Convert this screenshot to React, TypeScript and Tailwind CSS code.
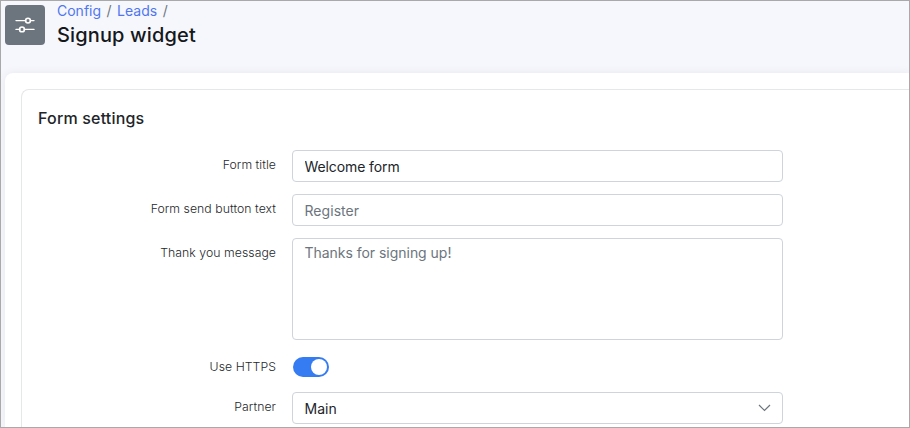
import type { ReactNode } from 'react';

function Row({ label, children }: { label: string; children: ReactNode }) {
  return (
    <div className="flex items-start">
      <label className="w-[254px] shrink-0 pt-1.5 text-right text-[12.25px] font-[350] leading-[18px] tracking-[0.05px] text-[#24282c]">
        {label}
      </label>
      <div className="ml-4 w-[491px]">{children}</div>
    </div>
  );
}

const field =
  'block w-full rounded-[4px] border border-[#ced4da] bg-white pl-[11.5px] text-[14px] leading-[21px] text-[#212529] outline-none placeholder:text-[#6c757d] placeholder:opacity-100';

export default function App() {
  return (
    <div className="flex h-[428px] w-[910px] flex-col overflow-hidden border border-[#a9a9a9] bg-[#f6f7fc] font-['Inter','Liberation_Sans',sans-serif]">
      <header className="flex h-[72px] shrink-0 pl-1 pt-1">
        <div className="flex size-10 items-center justify-center rounded-[4px] bg-[#6c757d]">
          <svg width="20" height="16" viewBox="0 0 20 16" fill="none" stroke="#fff" strokeWidth="1.4" strokeLinecap="round">
            <path d="M1 3.6h9.7M15.3 3.6H19M1 12.4h3.7M9.3 12.4H19" />
            <circle cx="13" cy="3.6" r="2.4" strokeWidth="1.6" />
            <circle cx="7" cy="12.4" r="2.4" strokeWidth="1.6" />
          </svg>
        </div>
        <div className="-mt-[5px] ml-3">
          <nav className="flex h-[22px] items-start gap-[5.5px] text-[14px] font-[380] leading-[22px] text-[#6c757d]">
            <a className="text-[#4f76f0]">Config</a>
            <span>/</span>
            <a className="text-[#4f76f0]">Leads</a>
            <span>/</span>
          </nav>
          <h1 className="text-[20px] font-medium leading-[26px] tracking-[0.14px] text-[#15181b]">Signup widget</h1>
        </div>
      </header>
      <main className="ml-1 flex-1 rounded-tl-[8px] bg-white pl-4 pt-4 shadow-[0_0_8px_rgba(60,50,90,0.08)]">
        <section className="h-full rounded-tl-[8px] border-l border-t border-[#e6e7e9] pt-[17px]">
          <h2 className="pl-4 text-[16px] font-medium leading-[22px] tracking-[0.18px] text-[#212529]">Form settings</h2>
          <div className="mt-[21px] flex flex-col gap-3">
            <Row label="Form title">
              <input className={`${field} h-8 tracking-[-0.1px]`} defaultValue="Welcome form" />
            </Row>
            <Row label="Form send button text">
              <input className={`${field} h-8 tracking-[0.05px]`} placeholder="Register" />
            </Row>
            <Row label="Thank you message">
              <textarea className={`${field} h-[102px] resize-none pt-[3px] tracking-[-0.03px]`} placeholder="Thanks for signing up!" />
            </Row>
            <Row label="Use HTTPS">
              <div className="flex h-7 items-center pl-px">
                <div className="mt-[2px] flex h-5 w-9 items-center justify-end rounded-full bg-[#357bf2] pr-0.5">
                  <span className="size-4 rounded-full bg-white" />
                </div>
              </div>
            </Row>
            <Row label="Partner">
              <div className={`${field} h-8`}>
                <div className="flex h-[30px] items-center justify-between pr-[11px]">
                  <span>Main</span>
                  <svg width="13" height="8" viewBox="0 0 13 8" fill="none" stroke="#6c757d" strokeWidth="1.2">
                    <path d="M1 1l5.5 5.5L12 1" />
                  </svg>
                </div>
              </div>
            </Row>
          </div>
        </section>
      </main>
    </div>
  );
}
